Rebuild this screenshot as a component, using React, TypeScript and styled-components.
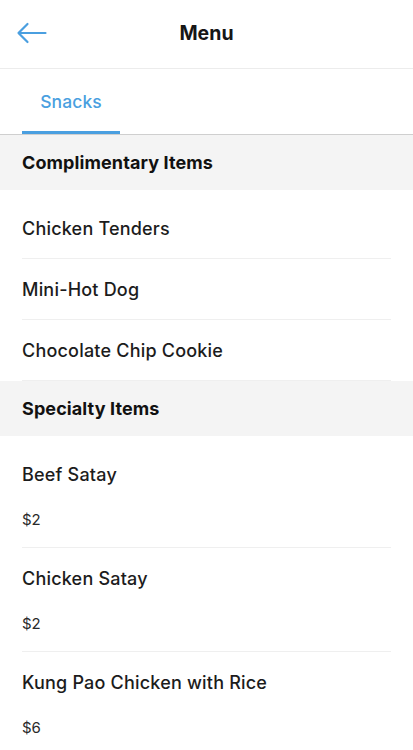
import React from 'react'
import styled, { createGlobalStyle } from 'styled-components'

const GlobalStyle = createGlobalStyle`
  html, body {
    margin: 0;
    padding: 0;
    background: #fff;
  }
  body {
    font-family: 'Inter', 'Open Sans', sans-serif;
    color: #1c1c1c;
  }
`

type Item = { name: string; price?: string }
type Section = { title: string; items: Item[] }

const sections: Section[] = [
  {
    title: 'Complimentary Items',
    items: [{ name: 'Chicken Tenders' }, { name: 'Mini-Hot Dog' }, { name: 'Chocolate Chip Cookie' }],
  },
  {
    title: 'Specialty Items',
    items: [
      { name: 'Beef Satay', price: '$2' },
      { name: 'Chicken Satay', price: '$2' },
      { name: 'Kung Pao Chicken with Rice', price: '$6' },
    ],
  },
]

const BackArrow = () => (
  <svg width="31" height="22" viewBox="0 0 31 22" fill="none">
    <path
      d="M29.5 11H2.5M11.5 2L2.5 11L11.5 20"
      stroke="#4a9fe0"
      strokeWidth="2.2"
      strokeLinecap="round"
      strokeLinejoin="round"
    />
  </svg>
)

const App = () => {
  return (
    <Page>
      <GlobalStyle />
      <Header>
        <BackButton aria-label="Back">
          <BackArrow />
        </BackButton>
        <Title>Menu</Title>
      </Header>
      <Tabs>
        <Tab $active>Snacks</Tab>
      </Tabs>
      {sections.map((section) => (
        <div key={section.title}>
          <SectionHeader>{section.title}</SectionHeader>
          <List>
            {section.items.map((item) => (
              <Row key={item.name} $tall={!!item.price}>
                <ItemName>{item.name}</ItemName>
                {item.price && <Price>{item.price}</Price>}
              </Row>
            ))}
          </List>
        </div>
      ))}
    </Page>
  )
}

const Page = styled.div`
  width: 413px;
  min-height: 750px;
  background: #fff;
`

const Header = styled.header`
  position: relative;
  height: 69px;
  display: flex;
  align-items: center;
  justify-content: center;
  border-bottom: 1px solid #ececec;
  box-sizing: border-box;
`

const BackButton = styled.button`
  position: absolute;
  left: 16px;
  top: 22px;
  padding: 0;
  border: none;
  background: none;
  display: flex;
`

const Title = styled.h1`
  margin: 0 0 2px;
  font-size: 19.5px;
  font-weight: 700;
  color: #161616;
`

const Tabs = styled.nav`
  height: 66px;
  display: flex;
  padding-left: 22px;
  border-bottom: 1px solid #cfcfcf;
  box-sizing: border-box;
`

const Tab = styled.div<{ $active?: boolean }>`
  width: 98px;
  display: flex;
  align-items: center;
  justify-content: center;
  padding-top: 2px;
  font-size: 17.5px;
  font-weight: 500;
  letter-spacing: 0.1px;
  color: ${(p) => (p.$active ? '#4a9fe0' : '#888')};
  border-bottom: 3px solid ${(p) => (p.$active ? '#4a9fe0' : 'transparent')};
`

const SectionHeader = styled.div`
  height: 55px;
  display: flex;
  align-items: center;
  padding: 0 0 0 22px;
  box-sizing: border-box;
  background: #f4f4f4;
  font-size: 18px;
  font-weight: 700;
  letter-spacing: 0.1px;
  color: #111;
`

const List = styled.div`
  padding: 8px 22px 0;
`

const Row = styled.div<{ $tall?: boolean }>`
  height: ${(p) => (p.$tall ? '104px' : '61px')};
  display: flex;
  flex-direction: column;
  justify-content: ${(p) => (p.$tall ? 'flex-start' : 'center')};
  padding-top: ${(p) => (p.$tall ? '19px' : '2px')};
  box-sizing: border-box;
  border-bottom: 1px solid #efefef;
`

const ItemName = styled.div`
  font-size: 18px;
  font-weight: 500;
  letter-spacing: 0.2px;
  color: #1c1c1c;
  line-height: 24px;
`

const Price = styled.div`
  margin-top: 23px;
  font-size: 15px;
  line-height: 20px;
  color: #2a2a2a;
`

export default App
